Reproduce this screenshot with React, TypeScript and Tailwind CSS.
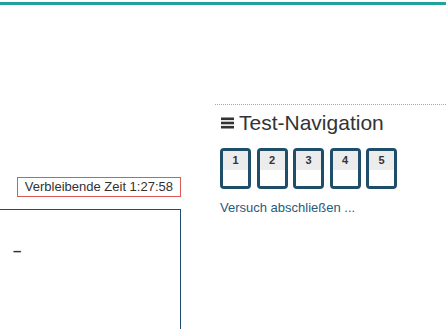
const pages = [1, 2, 3, 4, 5];

function BarsIcon() {
  return (
    <svg width="13" height="12" viewBox="0 0 13 12" className="shrink-0">
      <rect x="0" y="0.5" width="13" height="2.6" fill="#333" />
      <rect x="0" y="4.7" width="13" height="2.6" fill="#333" />
      <rect x="0" y="8.9" width="13" height="2.6" fill="#333" />
    </svg>
  );
}

export default function App() {
  return (
    <div className="h-[329px] overflow-hidden bg-white font-['Liberation_Sans',Arial,sans-serif] text-[#333]">
      <div className="pt-[2px]">
        <div className="h-[3px] bg-[#1fa39a]" />
      </div>

      <div className="flex">
        {/* main column */}
        <div className="w-[181px] shrink-0 pt-[172px]">
          <div className="flex justify-end">
            <div className="border border-[#dc5a56] px-[7px] py-[1px] text-[13px] leading-[16px] text-[#333]">
              Verbleibende Zeit 1:27:58
            </div>
          </div>
          <div className="ml-[-20px] mt-[12px] h-[160px] w-[201px] border border-[#1f4e6e] pl-[32px] pt-[29px]">
            <span className="text-[15px] font-bold leading-[16px] text-[#333]">–</span>
          </div>
        </div>

        {/* quiz navigation block */}
        <div className="ml-[34px] mt-[99px] flex-1 border-t border-dotted border-[#aaa]">
          <div className="flex items-center gap-[5px] pt-[6px] pl-[6px]">
            <BarsIcon />
            <h3 className="text-[21px] leading-[24px] text-[#333]">Test-Navigation</h3>
          </div>
          <div className="mt-[13px] flex gap-[5.5px] pl-[5px]">
            {pages.map((n) => (
              <div
                key={n}
                className="flex h-[41px] w-[31px] flex-col overflow-hidden rounded-[4px] border-[3px] border-[#1f4e6b]"
              >
                <div className="flex h-[19px] items-center justify-center bg-[#ececec] text-[11px] font-bold text-[#333]">
                  {n}
                </div>
                <div className="flex-1 bg-white" />
              </div>
            ))}
          </div>
          <a className="mt-[11px] block pl-[5px] text-[13px] leading-[16px] text-[#285a7c]">
            Versuch abschließen ...
          </a>
        </div>
      </div>
    </div>
  );
}
